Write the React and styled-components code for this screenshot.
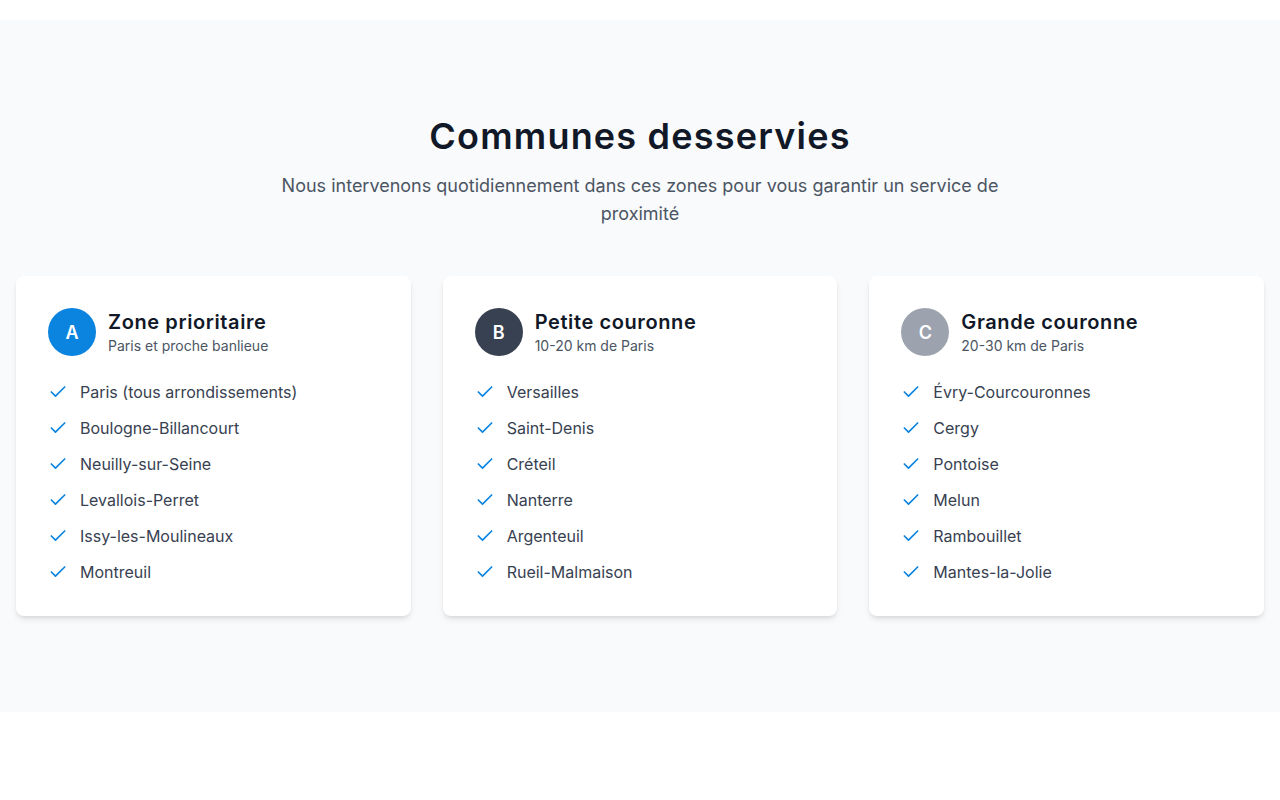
import React from "react";
import styled, { createGlobalStyle } from "styled-components";

const GlobalStyle = createGlobalStyle`
  * { box-sizing: border-box; }
  body {
    margin: 0;
    background: #fff;
    font-family: Inter, "Noto Sans", sans-serif;
    color: #111827;
  }
`;

const Page = styled.div`
  padding: 20px 0 88px;
`;

const Section = styled.section`
  background-color: #f9fafb;
  padding: 96px 16px;
`;

const Header = styled.div`
  text-align: center;
  margin-bottom: 48px;
`;

const Title = styled.h2`
  margin: 0;
  font-family: Inter, sans-serif;
  font-size: 36px;
  line-height: 40px;
  font-weight: 600;
  letter-spacing: 1.2px;
  color: #111827;
`;

const Subtitle = styled.p`
  margin: 16px auto 0;
  max-width: 768px;
  font-size: 18px;
  line-height: 28px;
  color: #4b5563;
`;

const Grid = styled.div`
  display: grid;
  grid-template-columns: repeat(3, 1fr);
  gap: 32px;
`;

const Card = styled.div`
  background: #fff;
  border-radius: 8px;
  padding: 32px;
  box-shadow: 0 4px 6px -1px rgba(0, 0, 0, 0.1), 0 2px 4px -2px rgba(0, 0, 0, 0.1);
`;

const CardHead = styled.div`
  display: flex;
  align-items: center;
  gap: 12px;
  margin-bottom: 24px;
`;

const Badge = styled.div`
  width: 48px;
  height: 48px;
  border-radius: 50%;
  flex-shrink: 0;
  display: flex;
  align-items: center;
  justify-content: center;
  background: ${(p) => p.$color};
  color: #fff;
  font-size: 18px;
  font-weight: 600;
`;

const ZoneName = styled.h3`
  margin: 0;
  font-size: 20px;
  line-height: 28px;
  font-weight: 600;
  letter-spacing: 0.6px;
  color: #111827;
`;

const ZoneInfo = styled.p`
  margin: 0;
  font-size: 14px;
  line-height: 20px;
  color: #4b5563;
`;

const List = styled.ul`
  list-style: none;
  margin: 0;
  padding: 0;
  display: flex;
  flex-direction: column;
  gap: 12px;
`;

const Item = styled.li`
  display: flex;
  align-items: center;
  gap: 12px;
  font-size: 16px;
  line-height: 24px;
  color: #374151;
`;

const Check = () => (
  <svg width="20" height="20" viewBox="0 0 24 24" fill="none" stroke="#0b84e0" strokeWidth="2" strokeLinecap="round" strokeLinejoin="round">
    <path d="M20 6 9 17l-5-5" />
  </svg>
);

const zones = [
  {
    letter: "A",
    color: "#0b84e0",
    name: "Zone prioritaire",
    info: "Paris et proche banlieue",
    towns: ["Paris (tous arrondissements)", "Boulogne-Billancourt", "Neuilly-sur-Seine", "Levallois-Perret", "Issy-les-Moulineaux", "Montreuil"],
  },
  {
    letter: "B",
    color: "#374151",
    name: "Petite couronne",
    info: "10-20 km de Paris",
    towns: ["Versailles", "Saint-Denis", "Créteil", "Nanterre", "Argenteuil", "Rueil-Malmaison"],
  },
  {
    letter: "C",
    color: "#9ca3af",
    name: "Grande couronne",
    info: "20-30 km de Paris",
    towns: ["Évry-Courcouronnes", "Cergy", "Pontoise", "Melun", "Rambouillet", "Mantes-la-Jolie"],
  },
];

const App = () => {
  return (
    <Page>
      <GlobalStyle />
      <Section>
        <Header>
          <Title>Communes desservies</Title>
          <Subtitle>
            Nous intervenons quotidiennement dans ces zones pour vous garantir un service de proximité
          </Subtitle>
        </Header>
        <Grid>
          {zones.map((z) => (
            <Card key={z.letter}>
              <CardHead>
                <Badge $color={z.color}>{z.letter}</Badge>
                <div>
                  <ZoneName>{z.name}</ZoneName>
                  <ZoneInfo>{z.info}</ZoneInfo>
                </div>
              </CardHead>
              <List>
                {z.towns.map((t) => (
                  <Item key={t}>
                    <Check />
                    {t}
                  </Item>
                ))}
              </List>
            </Card>
          ))}
        </Grid>
      </Section>
    </Page>
  );
};

export default App;
